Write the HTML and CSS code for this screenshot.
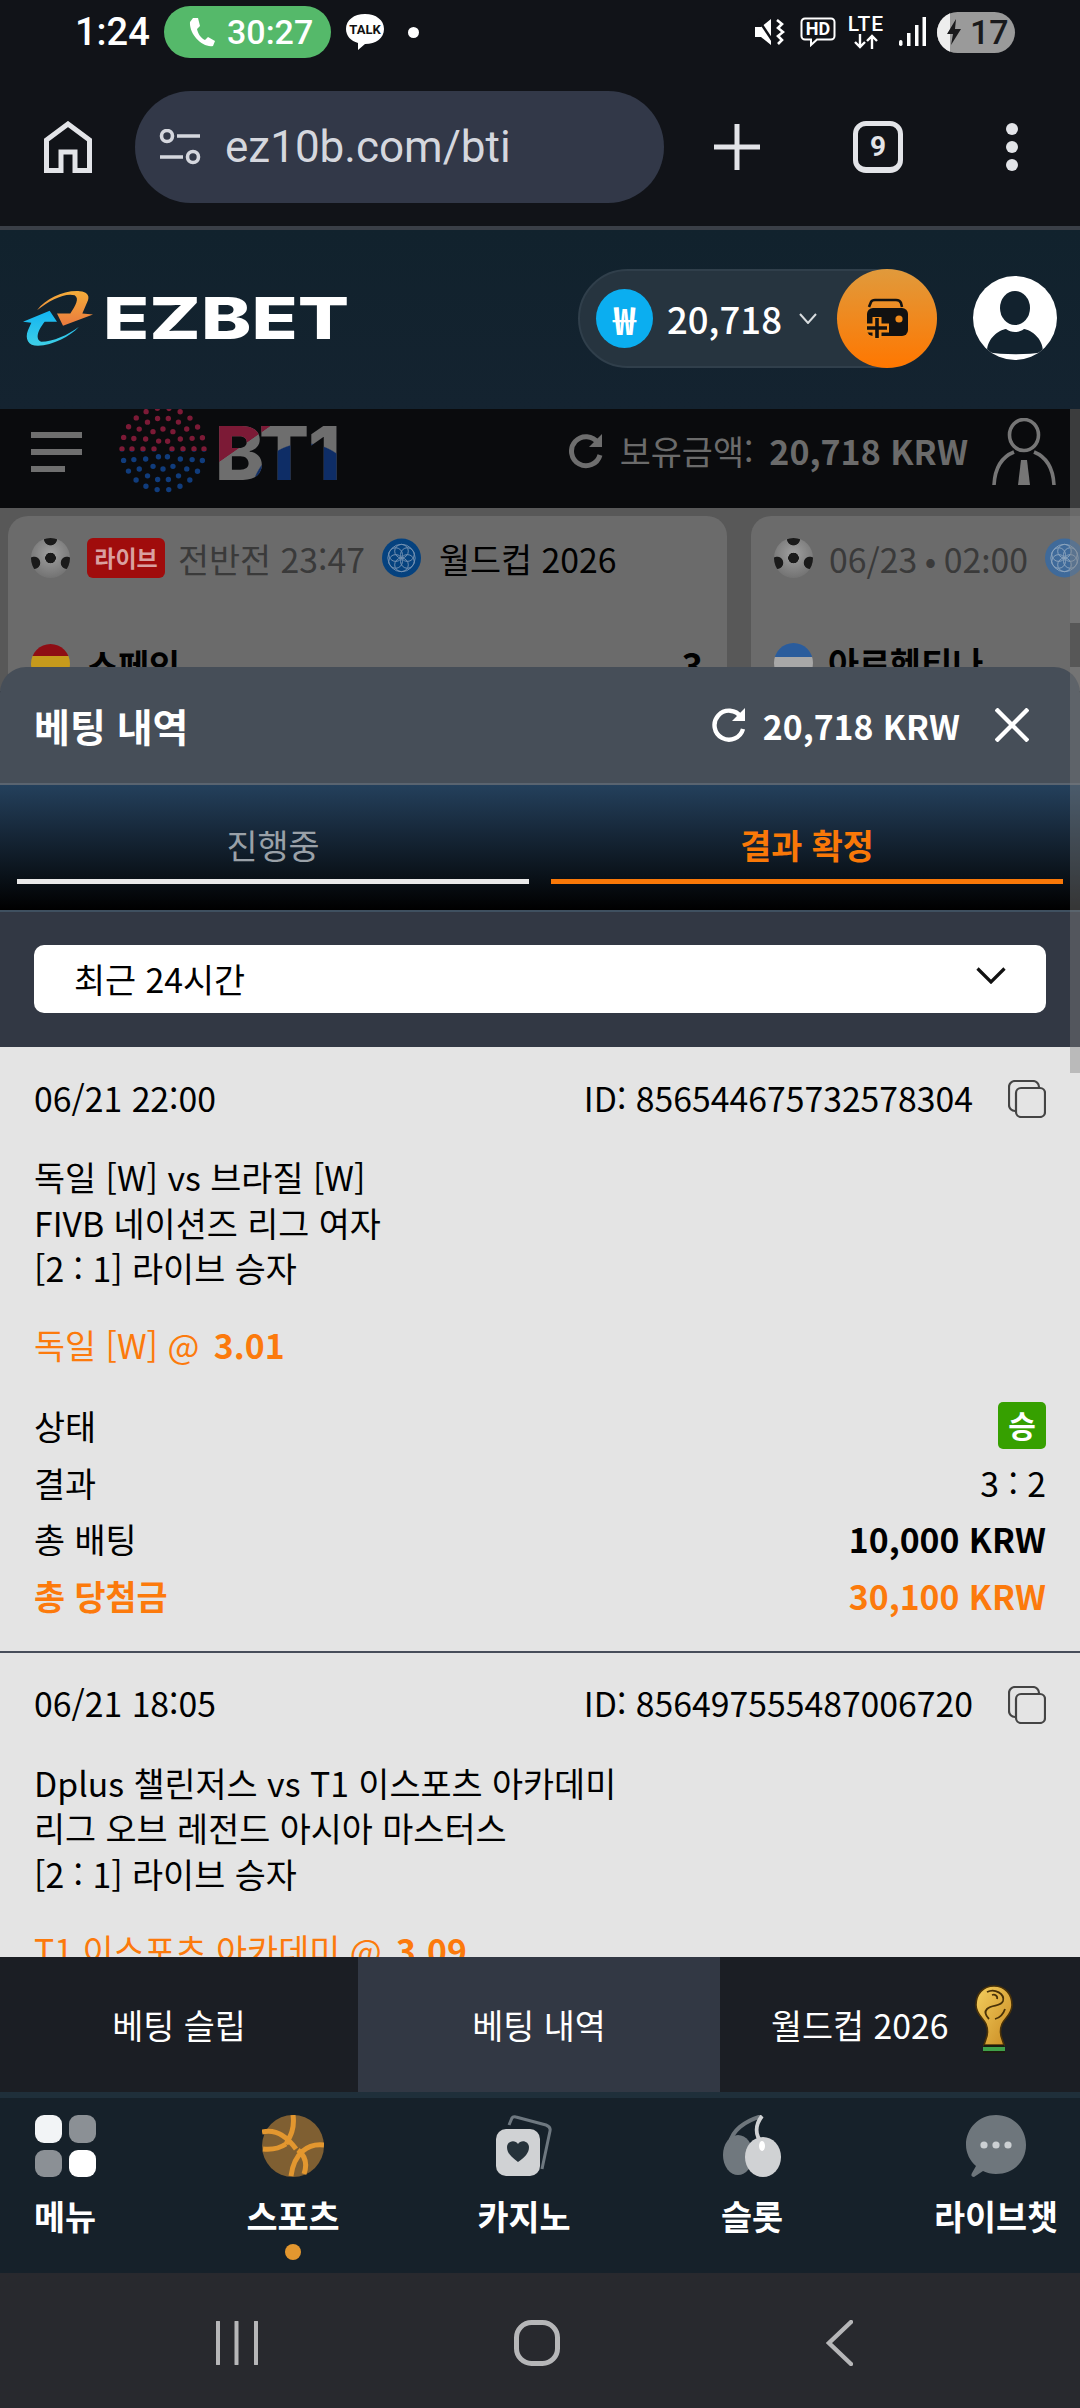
FILE: index.html
```html
<!DOCTYPE html>
<html lang="ko">
<head>
    <meta charset="UTF-8">
    <meta name="viewport" content="width=device-width, initial-scale=1.0">
    <title>베팅 내역</title>
    <link rel="stylesheet" href="styles.css">
</head>
<body>
<div class="screen">

    <!-- android status bar -->
    <div class="status">
        <span class="clock">1:24</span>
        <span class="call">
            <svg width="27" height="30" viewBox="0 0 27 30"><path d="M5 1 L10 1 L12 9 L9 12 C10 17 13 21 17 23 L20 20 L27 24 L25 29 C14 31 1 17 2 5 Z" fill="#fff"/></svg>
            30:27
        </span>
        <svg class="talk" width="38" height="36" viewBox="0 0 38 36"><path d="M19 0 C30 0 38 6 38 15 C38 24 30 30 19 30 L12 36 L12 29 C5 27 0 22 0 15 C0 6 8 0 19 0 Z" fill="#fff"/><text x="19" y="20" text-anchor="middle" class="talk-text">TALK</text></svg>
        <span class="notif-dot"></span>
        <span class="status-gap"></span>
        <svg width="30" height="28" viewBox="0 0 30 28"><path d="M0 9 H6 L16 1 V27 L6 19 H0 Z" fill="#fff"/><path d="M3 1 L19 25" stroke="#111318" stroke-width="2.5"/><path d="M22 2 L27 6 L23 10 L28 14 L23 18 L27 22 L23 26" fill="none" stroke="#fff" stroke-width="2.6"/></svg>
        <svg class="hd" width="36" height="30" viewBox="0 0 36 30"><path d="M5 1.5 H31 A3.5 3.5 0 0 1 34.5 5 V19 A3.5 3.5 0 0 1 31 22.5 H17 L11 28 V22.5 H5 A3.5 3.5 0 0 1 1.5 19 V5 A3.5 3.5 0 0 1 5 1.5 Z" fill="none" stroke="#fff" stroke-width="2"/><text x="18" y="18" text-anchor="middle" class="hd-text">HD</text></svg>
        <span class="lte">LTE<svg width="24" height="15" viewBox="0 0 24 15"><path d="M6 0 V13 M1 8 L6 13 L11 8 M18 15 V2 M13 7 L18 2 L23 7" fill="none" stroke="#fff" stroke-width="2.4"/></svg></span>
        <svg class="signal" width="27" height="30" viewBox="0 0 27 30"><rect x="0" y="23" width="3.5" height="6" rx="1.7" fill="#fff"/><rect x="8" y="16" width="3.5" height="13" fill="#fff"/><rect x="16" y="8" width="3.5" height="21" fill="#fff"/><rect x="23.5" y="0" width="3.5" height="29" fill="#fff"/></svg>
        <span class="battery">
            <span class="battery-fill"></span>
            <svg class="bolt" width="14" height="26" viewBox="0 0 14 26"><path d="M9 0 L0 15 H6 L4 26 L14 10 H8 Z" fill="#1a1a1c"/></svg>
            <span class="battery-num">17</span>
        </span>
    </div>

    <!-- chrome toolbar -->
    <div class="browser">
        <svg width="48" height="52" viewBox="0 0 48 52"><path d="M2.5 49.5 V19 L24 3 L45.5 19 V49.5 H31 V31 H17 V49.5 Z" fill="none" stroke="#e3e4e8" stroke-width="5"/></svg>
        <div class="urlbar">
            <svg width="42" height="36" viewBox="0 0 42 36"><circle cx="8" cy="7" r="5.5" fill="none" stroke="#d5d7de" stroke-width="3.6"/><path d="M18 7 H41 M1 28 H24" stroke="#d5d7de" stroke-width="3.6"/><circle cx="34" cy="28" r="5.5" fill="none" stroke="#d5d7de" stroke-width="3.6"/></svg>
            <span class="url">ez10b.com/bti</span>
        </div>
        <svg class="plus" width="46" height="46" viewBox="0 0 46 46"><path d="M23 0 V46 M0 23 H46" stroke="#e3e4e8" stroke-width="5"/></svg>
        <span class="tabcount">9</span>
        <span class="dots"><i></i><i></i><i></i></span>
    </div>

    <!-- site header -->
    <header class="site-head">
        <div class="logo">
            <svg width="70" height="57" viewBox="70 85 210 170">
                <defs>
                    <linearGradient id="lgo" x1="0" y1="0" x2="0" y2="1"><stop offset="0" stop-color="#f5ad3a"/><stop offset="1" stop-color="#ea7a3e"/></linearGradient>
                    <linearGradient id="lgb" x1="0" y1="0" x2="0" y2="1"><stop offset="0" stop-color="#12b4f2"/><stop offset="1" stop-color="#3ecfe6"/></linearGradient>
                </defs>
                <path d="M112 145 C140 110 190 85 240 88 C262 90 270 100 265 115 L248 155 L280 158 L190 192 L172 155 L212 155 C228 130 240 110 225 100 C195 92 150 115 112 145 Z" fill="url(#lgo)"/>
                <path d="M70 180 L150 147 L172 180 L135 180 C115 205 105 232 125 240 C160 240 205 220 238 195 C210 225 160 250 115 252 C85 252 75 230 85 205 L95 183 Z" fill="url(#lgb)"/>
            </svg>
            <span class="logo-text">EZBET</span>
        </div>
        <div class="balance">
            <span class="won">₩</span>
            <span class="balance-num">20,718</span>
            <svg width="18" height="11" viewBox="0 0 18 11"><path d="M1 1 L9 10 L17 1" fill="none" stroke="#d8dcdf" stroke-width="2"/></svg>
            <span class="wallet">
                <svg class="wallet-icon" width="43" height="38" viewBox="0 0 43 38"><path d="M3 8 L5 3 Q6 1 9 1 H30 Q34 1 35 4 L36 8" fill="none" stroke="#111" stroke-width="2.6"/><rect x="1" y="9" width="41" height="28" rx="6" fill="#111"/><circle cx="33" cy="20" r="3.6" fill="#f08a1a"/><path d="M11 18 V40 M-1 29 H23" stroke="#f08a1a" stroke-width="9"/><path d="M11 19 V39 M1 29 H21" stroke="#111" stroke-width="3.6"/></svg>
            </span>
        </div>
        <svg class="avatar" width="84" height="84" viewBox="0 0 84 84"><defs><clipPath id="av"><circle cx="42" cy="42" r="42"/></clipPath></defs><circle cx="42" cy="42" r="42" fill="#fff"/><ellipse cx="42" cy="32" rx="15" ry="17" fill="#12222e"/><path d="M14 76 C14 62 26 54 33 53 C38 57 46 57 51 53 C58 54 70 62 70 76 C55 79 30 79 14 76 Z" fill="#12222e" clip-path="url(#av)"/></svg>
    </header>

    <!-- embedded sportsbook, dimmed behind the sheet -->
    <div class="book-bar">
        <span class="burger"><i></i><i></i><i></i></span>
        <svg class="book-dots" width="88" height="84" viewBox="0 0 88 84">
            <defs>
                <clipPath id="halfT"><rect x="0" y="-2" width="88" height="44"/></clipPath>
                <clipPath id="halfB"><rect x="0" y="42" width="88" height="44"/></clipPath>
            </defs>
            <g fill="none" stroke-width="5.4" stroke-linecap="round" stroke="#7c1a36" clip-path="url(#halfT)">
                <circle cx="44" cy="40" r="41" stroke-dasharray="0 11.7"/>
                <circle cx="44" cy="40" r="31" stroke-dasharray="0 10.8"/>
                <circle cx="44" cy="40" r="20" stroke-dasharray="0 10.4"/>
                <circle cx="44" cy="40" r="9" stroke-dasharray="0 9.4"/>
            </g>
            <g fill="none" stroke-width="5.4" stroke-linecap="round" stroke="#103c7c" clip-path="url(#halfB)">
                <circle cx="44" cy="40" r="41" stroke-dasharray="0 11.7"/>
                <circle cx="44" cy="40" r="31" stroke-dasharray="0 10.8"/>
                <circle cx="44" cy="40" r="20" stroke-dasharray="0 10.4"/>
                <circle cx="44" cy="40" r="9" stroke-dasharray="0 9.4"/>
            </g>
        </svg>
        <span class="book-name">BT1</span>
        <span class="book-gap"></span>
        <svg class="book-refresh" width="34" height="36" viewBox="0 0 34 36"><path d="M29 10 A14.5 14.5 0 1 0 31 22" fill="none" stroke="#6e6e6e" stroke-width="5"/><path d="M33 1 V14 H20 Z" fill="#6e6e6e"/></svg>
        <span class="book-label">보유금액:</span>
        <span class="book-amount">20,718 KRW</span>
        <svg class="book-agent" width="64" height="68" viewBox="0 0 64 68"><ellipse cx="32" cy="17" rx="14.5" ry="15.5" fill="none" stroke="#767676" stroke-width="3.6"/><path d="M2 67 C3 48 12 38 22 34 M62 67 C61 48 52 38 42 34" fill="none" stroke="#767676" stroke-width="3.6"/><path d="M29 42 H35 L38 67 H26 Z" fill="#767676"/></svg>
    </div>

    <div class="behind">
        <div class="match">
            <div class="match-top">
                <span class="ball"></span>
                <span class="live">라이브</span>
                <span class="match-time">전반전 23:47</span>
                <svg class="cup" width="39" height="40" viewBox="0 0 40 40"><circle cx="20" cy="20" r="20" fill="#05427f"/><g fill="none" stroke="#7391b2" stroke-width="1"><circle cx="20" cy="20" r="14"/><circle cx="20" cy="13" r="7"/><circle cx="20" cy="27" r="7"/><circle cx="14" cy="16.5" r="7"/><circle cx="26" cy="16.5" r="7"/><circle cx="14" cy="23.5" r="7"/><circle cx="26" cy="23.5" r="7"/></g></svg>
                <span class="league">월드컵 2026</span>
            </div>
            <div class="team">
                <span class="flag flag-es"></span>
                <span class="team-name">스페인</span>
                <span class="team-score">3</span>
            </div>
        </div>
        <div class="match match-next">
            <div class="match-top">
                <span class="ball"></span>
                <span class="match-time">06/23 • 02:00</span>
                <svg class="cup" width="39" height="40" viewBox="0 0 40 40"><circle cx="20" cy="20" r="20" fill="#3f6a9a"/><g fill="none" stroke="#8ba3bd" stroke-width="1"><circle cx="20" cy="20" r="14"/><circle cx="20" cy="13" r="7"/><circle cx="20" cy="27" r="7"/><circle cx="14" cy="16.5" r="7"/><circle cx="26" cy="16.5" r="7"/><circle cx="14" cy="23.5" r="7"/><circle cx="26" cy="23.5" r="7"/></g></svg>
            </div>
            <div class="team">
                <span class="flag flag-ar"></span>
                <span class="team-name">아르헨티나</span>
            </div>
        </div>
    </div>

    <!-- bet history sheet -->
    <section class="sheet">
        <div class="sheet-head">
            <h1>베팅 내역</h1>
            <svg class="sheet-refresh" width="34" height="36" viewBox="0 0 34 36"><path d="M29 10 A14.5 14.5 0 1 0 31 22" fill="none" stroke="#fff" stroke-width="4.4"/><path d="M33 1 V14 H20 Z" fill="#fff"/></svg>
            <span class="sheet-amount">20,718 KRW</span>
            <svg class="sheet-close" width="34" height="34" viewBox="0 0 34 34"><path d="M1 1 L33 33 M33 1 L1 33" stroke="#fff" stroke-width="4.4"/></svg>
        </div>
        <div class="tabs">
            <div class="tab">진행중</div>
            <div class="tab tab-on">결과 확정</div>
        </div>
        <div class="filter">
            <div class="select">
                <span class="select-text">최근 24시간</span>
                <svg width="30" height="17" viewBox="0 0 30 17"><path d="M1.5 1.5 L15 15 L28.5 1.5" fill="none" stroke="#111" stroke-width="3.2"/></svg>
            </div>
        </div>
        <div class="bets">
            <article class="bet">
                <div class="bet-head">
                    <span class="bet-date">06/21 22:00</span>
                    <span class="bet-id">ID: 856544675732578304</span>
                    <svg class="copy" width="38" height="38" viewBox="0 0 38 38"><rect x="1" y="1" width="30" height="30" rx="6" fill="none" stroke="#444" stroke-width="2.2"/><rect x="8" y="8" width="29" height="29" rx="5" fill="#e4e4e4" stroke="#444" stroke-width="2.2"/></svg>
                </div>
                <div class="bet-title">
                    <div>독일 [W] vs 브라질 [W]</div>
                    <div>FIVB 네이션즈 리그 여자</div>
                    <div>[2 : 1] 라이브 승자</div>
                </div>
                <div class="bet-pick">독일 [W] @ <b>3.01</b></div>
                <div class="bet-rows">
                    <div class="row"><span>상태</span><span class="win">승</span></div>
                    <div class="row"><span>결과</span><span>3 : 2</span></div>
                    <div class="row"><span>총 배팅</span><b>10,000 KRW</b></div>
                    <div class="row row-total"><b>총 당첨금</b><b>30,100 KRW</b></div>
                </div>
            </article>
            <article class="bet">
                <div class="bet-head">
                    <span class="bet-date">06/21 18:05</span>
                    <span class="bet-id">ID: 856497555487006720</span>
                    <svg class="copy" width="38" height="38" viewBox="0 0 38 38"><rect x="1" y="1" width="30" height="30" rx="6" fill="none" stroke="#444" stroke-width="2.2"/><rect x="8" y="8" width="29" height="29" rx="5" fill="#e4e4e4" stroke="#444" stroke-width="2.2"/></svg>
                </div>
                <div class="bet-title">
                    <div>Dplus 챌린저스 vs T1 이스포츠 아카데미</div>
                    <div>리그 오브 레전드 아시아 마스터스</div>
                    <div>[2 : 1] 라이브 승자</div>
                </div>
                <div class="bet-pick">T1 이스포츠 아카데미 @ <b>3.09</b></div>
            </article>
        </div>
        <div class="sheet-nav">
            <div class="sheet-btn">베팅 슬립</div>
            <div class="sheet-btn sheet-btn-on">베팅 내역</div>
            <div class="sheet-btn sheet-btn-cup">
                월드컵 2026
                <svg class="trophy" width="38" height="68" viewBox="0 0 38 68">
                    <defs><linearGradient id="gold" x1="0" y1="0" x2="1" y2="1"><stop offset="0" stop-color="#f4cf5e"/><stop offset="1" stop-color="#c98a22"/></linearGradient></defs>
                    <path d="M19 1 C30 1 37 9 37 20 C37 29 30 33 27 39 C25 44 25 49 27 54 L29 60 H9 L11 54 C13 49 13 44 11 39 C8 33 1 29 1 20 C1 9 8 1 19 1 Z" fill="url(#gold)" stroke="#4a3208" stroke-width="1.6"/>
                    <path d="M12 7 C20 3 30 9 28 16 C26 22 17 19 12 24 C9 27 11 31 14 34 M30 24 C28 30 24 33 20 34 M17 10 C20 9 23 11 22 14" fill="none" stroke="#4a3208" stroke-width="1.8"/>
                    <rect x="9" y="60" width="20" height="2" fill="#1c1c10"/>
                    <rect x="8" y="62" width="22" height="5" fill="#3fa04a"/>
                    <rect x="8" y="66" width="22" height="2" fill="#1c1c10"/>
                </svg>
            </div>
        </div>
    </section>

    <!-- site bottom nav -->
    <nav class="bottom">
        <div class="nav-item">
            <span class="nav-icon quad"><i class="q1"></i><i class="q2"></i><i class="q2"></i><i class="q4"></i></span>
            <span class="nav-label">메뉴</span>
        </div>
        <div class="nav-item">
            <svg class="nav-icon" width="62" height="62" viewBox="0 0 62 62"><circle cx="31" cy="31" r="31" fill="#7f5f32"/><path d="M31 0 C33 14 28 22 24 29 M0 17 C12 14 24 20 34 34 M62 30 C46 28 32 38 29 61 M42 59 C46 48 42 40 36 35 M1 34 C10 35 18 33 24 29" fill="none" stroke="#e3972f" stroke-width="5"/></svg>
            <span class="nav-label">스포츠</span>
            <span class="nav-dot"></span>
        </div>
        <div class="nav-item">
            <svg class="nav-icon" width="56" height="62" viewBox="0 0 56 62"><path d="M13 10 L16 3 Q17 1 20 2 L50 10 Q55 12 54 16 L46 54" fill="none" stroke="#6e7880" stroke-width="3"/><rect x="0" y="14" width="44" height="47" rx="10" fill="#d0d2d4"/><path d="M22 47 C15 42 11 38 11 32 C11 26 19 24 22 29 C25 24 33 26 33 32 C33 38 29 42 22 47 Z" fill="#26323a"/></svg>
            <span class="nav-label">카지노</span>
        </div>
        <div class="nav-item">
            <svg class="nav-icon" width="60" height="62" viewBox="0 0 60 62"><path d="M8 28 C10 16 22 6 40 1" fill="none" stroke="#6e767c" stroke-width="4"/><ellipse cx="16" cy="40" rx="15" ry="20" fill="#70787e"/><path d="M40 1 C33 10 33 20 40 28" fill="none" stroke="#d0d2d4" stroke-width="4"/><ellipse cx="41" cy="42" rx="18" ry="20" fill="#d0d2d4"/><ellipse cx="40" cy="31" rx="3" ry="5" fill="#fff"/></svg>
            <span class="nav-label">슬롯</span>
        </div>
        <div class="nav-item">
            <svg class="nav-icon" width="60" height="62" viewBox="0 0 60 62"><path d="M30 0 C47 0 60 13 60 30 C60 47 47 59 30 59 C25 59 21 58 17 56 L8 62 C5 62 5 60 6 58 L10 51 C4 46 0 38 0 30 C0 13 13 0 30 0 Z" fill="#6e767c"/><circle cx="18" cy="30" r="3.6" fill="#ccd0d3"/><circle cx="30" cy="30" r="3.6" fill="#ccd0d3"/><circle cx="42" cy="30" r="3.6" fill="#ccd0d3"/></svg>
            <span class="nav-label">라이브챗</span>
        </div>
    </nav>

    <!-- android nav buttons -->
    <div class="softkeys">
        <svg width="42" height="44" viewBox="0 0 42 44"><path d="M2 1 V43 M20.5 1 V43 M40 1 V43" stroke="#b6b6b8" stroke-width="4" stroke-linecap="round"/></svg>
        <svg width="46" height="46" viewBox="0 0 46 46"><rect x="2.5" y="2.5" width="41" height="41" rx="15" fill="none" stroke="#b6b6b8" stroke-width="5"/></svg>
        <svg width="27" height="46" viewBox="0 0 27 46"><path d="M25 2 L3 23 L25 44" fill="none" stroke="#b6b6b8" stroke-width="4.4" stroke-linecap="round"/></svg>
    </div>

    <!-- page scrollbar, overlays everything -->
    <div class="scrollbar"><span class="scrollbar-inner"></span></div>
</div>
</body>
</html>
```

FILE: styles.css
```css
* {
    box-sizing: border-box;
}
body {
    margin: 0;
    font-family: "Noto Sans CJK KR", "Noto Sans", sans-serif;
    background-color: #111318;
}
h1 {
    margin: 0;
}
svg {
    display: block;
    flex: none;
}
.screen {
    position: relative;
    width: 1080px;
    height: 2408px;
    overflow: hidden;
    display: flex;
    flex-direction: column;
}

/* status bar */
.status {
    height: 70px;
    flex: none;
    display: flex;
    align-items: center;
    padding: 0 65px 6px 75px;
    background-color: #111318;
    color: #fff;
    font-family: Roboto, sans-serif;
}
.clock {
    font-size: 38px;
    font-weight: 500;
    width: 89px;
}
.call {
    width: 167px;
    height: 52px;
    border-radius: 26px;
    background-color: #55b96a;
    display: flex;
    align-items: center;
    gap: 12px;
    padding-left: 24px;
    font-size: 34px;
    font-weight: 500;
}
.talk {
    margin-left: 15px;
}
.talk-text {
    font-family: Roboto, sans-serif;
    font-size: 13px;
    font-weight: 700;
    fill: #111;
}
.notif-dot {
    width: 11px;
    height: 11px;
    border-radius: 50%;
    background-color: #fff;
    margin-left: 24px;
}
.status-gap {
    flex: 1;
}
.hd {
    margin-left: 15px;
}
.hd-text {
    font-family: Roboto, sans-serif;
    font-size: 18px;
    font-weight: 700;
    fill: #fff;
}
.lte {
    margin-left: 11px;
    width: 38px;
    font-size: 21px;
    font-weight: 500;
    line-height: 18px;
    letter-spacing: 1px;
    display: flex;
    flex-direction: column;
    align-items: center;
    gap: 1px;
}
.signal {
    margin-left: 14px;
}
.battery {
    position: relative;
    margin-left: 11px;
    width: 78px;
    height: 41px;
    border-radius: 21px;
    background-color: #9a9a9a;
    overflow: hidden;
    display: flex;
    align-items: center;
    color: #1a1a1c;
}
.battery-fill {
    width: 13px;
    height: 100%;
    background-color: #ededed;
}
.bolt {
    margin-left: -3px;
}
.battery-num {
    margin-left: 9px;
    font-size: 34px;
    font-weight: 500;
}

/* browser toolbar */
.browser {
    height: 160px;
    flex: none;
    display: flex;
    align-items: center;
    padding: 0 0 2px 44px;
    background-color: #111318;
    border-bottom: 4px solid #3a3f47;
}
.urlbar {
    width: 529px;
    height: 112px;
    margin-left: 43px;
    border-radius: 56px;
    background-color: #323848;
    display: flex;
    align-items: center;
    padding-left: 24px;
    gap: 24px;
}
.url {
    font-family: Roboto, sans-serif;
    font-size: 44px;
    color: #d5d7de;
}
.plus {
    margin-left: 50px;
}
.tabcount {
    width: 50px;
    height: 52px;
    margin-left: 93px;
    border: 5px solid #e3e4e8;
    border-bottom-width: 6px;
    border-radius: 13px;
    display: flex;
    align-items: center;
    justify-content: center;
    font-family: Roboto, sans-serif;
    font-size: 28px;
    font-weight: 700;
    color: #e3e4e8;
}
.dots {
    margin-left: 103px;
    display: flex;
    flex-direction: column;
    gap: 6px;
}
.dots i {
    width: 12px;
    height: 12px;
    border-radius: 50%;
    background-color: #e3e4e8;
}

/* site header */
.site-head {
    height: 179px;
    flex: none;
    display: flex;
    align-items: center;
    padding: 0 23px 3px 23px;
    background: linear-gradient(180deg, #11222d, #142330);
}
.logo {
    display: flex;
    align-items: center;
    width: 555px;
}
.logo-text {
    margin-left: 10px;
    font-family: Inter, sans-serif;
    font-size: 58px;
    font-weight: 800;
    line-height: 57px;
    color: #fff;
    transform: scaleX(1.31);
    transform-origin: left center;
}
.balance {
    width: 359px;
    height: 99px;
    border-radius: 50px;
    background-color: #26343f;
    border: 2px solid #303f4b;
    display: flex;
    align-items: center;
    padding-left: 16px;
    color: #fff;
}
.won {
    width: 57px;
    height: 59px;
    border-radius: 50%;
    background-color: #0baef0;
    display: flex;
    align-items: center;
    justify-content: center;
    font-size: 38px;
    font-weight: 700;
}
.balance-num {
    margin-left: 14px;
    margin-right: 17px;
    font-size: 36.5px;
    font-weight: 500;
}
.wallet {
    margin-left: auto;
    margin-right: -2px;
    width: 100px;
    height: 99px;
    border-radius: 50%;
    background: linear-gradient(180deg, #e09a3c, #ff7700);
    display: flex;
    align-items: center;
    justify-content: center;
}
.wallet-icon {
    overflow: visible;
}
.avatar {
    margin-left: 36px;
}

/* dimmed sportsbook */
.book-bar {
    height: 99px;
    flex: none;
    display: flex;
    align-items: flex-start;
    overflow: hidden;
    background-color: #0a0b0d;
    padding-left: 31px;
}
.burger {
    margin-top: 23px;
    width: 51px;
    display: flex;
    flex-direction: column;
    gap: 11px;
}
.burger i {
    height: 6px;
    background-color: #6f6f6f;
}
.burger i:last-child {
    width: 34px;
}
.book-dots {
    margin-left: 37px;
}
.book-name {
    margin-left: 8px;
    margin-top: 7px;
    font-family: Inter, sans-serif;
    font-size: 74px;
    font-weight: 800;
    line-height: 74px;
    letter-spacing: -1px;
    color: transparent;
    background:
        linear-gradient(145deg, #7c1a36 0 30%, transparent 30.5%),
        radial-gradient(circle at 72% 110%, #0e2d66 0 44%, transparent 45%),
        linear-gradient(#6e6e6e, #6e6e6e);
    -webkit-background-clip: text;
    background-clip: text;
}
.book-gap {
    flex: 1;
}
.book-refresh {
    margin-top: 24px;
}
.book-label {
    margin-left: 17px;
    font-size: 33.75px;
    line-height: 84px;
    color: #6b6b6b;
}
.book-amount {
    margin-left: 16px;
    font-size: 34px;
    font-weight: 700;
    line-height: 84px;
    color: #6b6b6b;
}
.book-agent {
    margin: 9px 24px 0 24px;
}
.behind {
    height: 183px;
    margin-bottom: -24px;
    flex: none;
    display: flex;
    gap: 24px;
    padding: 8px 0 0 8px;
    overflow: hidden;
    background-color: #585858;
}
.match {
    width: 719px;
    height: 220px;
    flex: none;
    border-radius: 20px;
    background-color: #6b6b6b;
    padding: 22px 23px;
}
.match-next {
    width: 500px;
}
.match-top {
    height: 40px;
    display: flex;
    align-items: center;
}
.ball {
    width: 39px;
    height: 40px;
    border-radius: 50%;
    background:
        radial-gradient(circle at 50% 50%, #1a1a1a 0 18%, transparent 20%),
        radial-gradient(circle at 50% 2%, #1a1a1a 0 14%, transparent 16%),
        radial-gradient(circle at 8% 62%, #1a1a1a 0 13%, transparent 15%),
        radial-gradient(circle at 92% 62%, #1a1a1a 0 13%, transparent 15%),
        radial-gradient(circle at 50% 40%, #a0a0a0, #666);
}
.live {
    margin-left: 17px;
    width: 78px;
    height: 40px;
    border-radius: 6px;
    background-color: #a00c0c;
    color: #d9a0a0;
    font-size: 23px;
    font-weight: 700;
    line-height: 38px;
    text-align: center;
}
.match-time {
    margin-left: 13px;
    font-size: 33.75px;
    color: #3a3a3a;
    white-space: nowrap;
}
.match-next .match-time {
    margin-left: 16px;
}
.cup {
    margin-left: 17px;
}
.league {
    margin-left: 18px;
    font-size: 33.75px;
    color: #000;
}
.team {
    margin-top: 60px;
    display: flex;
    align-items: center;
}
.flag {
    width: 39px;
    height: 40px;
    flex: none;
    border-radius: 50%;
}
.flag-es {
    background: linear-gradient(#8e0d14 0 30%, #c69a1c 30%);
}
.flag-ar {
    background: linear-gradient(#2a5c9c 0 34%, #a8a8a8 34%);
}
.team-name {
    margin-left: 17px;
    font-size: 33.75px;
    font-weight: 700;
    color: #000;
}
.match-next .team-name {
    margin-left: 15px;
}
.team-score {
    margin-left: auto;
    margin-right: 1px;
    font-size: 36px;
    font-weight: 700;
    color: #000;
}

/* sheet */
.sheet {
    position: relative;
    flex: 1;
    min-height: 0;
    display: flex;
    flex-direction: column;
    border-radius: 26px 26px 0 0;
    overflow: hidden;
}
.sheet-head {
    height: 118px;
    flex: none;
    display: flex;
    align-items: center;
    padding: 0 51px 0 34px;
    background-color: #464e58;
    border-bottom: 2px solid #5a6470;
    color: #fff;
}
.sheet-head h1 {
    flex: 1;
    font-size: 39px;
    font-weight: 700;
}
.sheet-amount {
    margin-left: 17px;
    font-size: 33.75px;
    font-weight: 700;
}
.sheet-close {
    margin-left: 35px;
}
.tabs {
    height: 127px;
    flex: none;
    display: flex;
    justify-content: space-between;
    padding: 0 17px;
    background: linear-gradient(180deg, #24405c, #000);
    border-bottom: 2px solid #3f5060;
}
.tab {
    width: 512px;
    height: 99px;
    border-bottom: 5px solid #e8e8e8;
    text-align: center;
    font-size: 33.75px;
    line-height: 120px;
    color: #9aa1a8;
}
.tab-on {
    border-bottom-color: #f97808;
    color: #f97808;
    font-weight: 700;
}
.filter {
    height: 135px;
    flex: none;
    padding: 33px 34px 34px;
    background-color: #323844;
}
.select {
    height: 68px;
    border-radius: 10px;
    background-color: #fff;
    display: flex;
    align-items: center;
    justify-content: space-between;
    padding: 0 40px;
    font-size: 33.75px;
    color: #000;
}
.select-text {
    margin-top: -2px;
}
.select svg {
    margin-top: -8px;
}
.bets {
    height: 910px;
    flex: none;
    overflow: hidden;
    background-color: #e4e4e4;
    color: #000;
    font-size: 33.75px;
}
.bet {
    padding: 27px 34px 27px;
    border-bottom: 2px solid #474d5a;
}
.bet-head {
    height: 46px;
    display: flex;
    align-items: center;
}
.bet-date {
    flex: 1;
}
.copy {
    margin-left: 35px;
    margin-top: 4px;
}
.bet-title {
    margin-top: 34px;
    line-height: 45.5px;
}
.bet-pick {
    margin-top: 31px;
    line-height: 46px;
    color: #fc7a0c;
}
.bet-pick b {
    margin-left: 5px;
}
.bet-rows {
    margin-top: 30px;
}
.row {
    height: 56.5px;
    display: flex;
    align-items: center;
    justify-content: space-between;
}
.row-total {
    color: #fc7a0c;
}
.win {
    width: 48px;
    height: 47px;
    border-radius: 5px;
    background-color: #36a000;
    color: #fff;
    font-size: 30px;
    font-weight: 700;
    line-height: 44px;
    text-align: center;
}
.sheet-nav {
    height: 135px;
    flex: none;
    display: flex;
    background-color: #1b1e24;
    color: #fff;
    font-size: 33.75px;
}
.sheet-btn {
    width: 358px;
    flex: none;
    display: flex;
    align-items: center;
    justify-content: center;
}
.sheet-btn-on {
    width: 362px;
    background-color: #323844;
}
.sheet-btn-cup {
    width: 360px;
    justify-content: flex-start;
    padding-left: 51px;
    gap: 26px;
}
.trophy {
    margin-top: -12px;
}

/* site bottom nav */
.bottom {
    height: 181px;
    flex: none;
    display: grid;
    grid-template-columns: 130px 326px 136px 320px 168px;
    background-color: #16212a;
    border-top: 6px solid #1f2f3a;
    padding-top: 17px;
}
.nav-item {
    display: flex;
    flex-direction: column;
    align-items: center;
    color: #fff;
}
.nav-icon {
    height: 62px;
}
.quad {
    width: 61px;
    display: grid;
    grid-template-columns: 27px 27px;
    gap: 7px;
}
.quad i {
    border-radius: 9px;
}
.quad .q1 {
    background-color: #f2f4f6;
}
.quad .q2 {
    background-color: #8b9095;
}
.quad .q4 {
    background-color: #fff;
}
.nav-label {
    margin-top: 15px;
    font-size: 33.75px;
    font-weight: 700;
    line-height: 48px;
    white-space: nowrap;
}
.nav-dot {
    width: 16px;
    height: 16px;
    margin-top: 4px;
    border-radius: 50%;
    background-color: #e3972f;
}

/* soft keys */
.softkeys {
    height: 135px;
    flex: none;
    display: grid;
    grid-template-columns: 216px 298px 312px 1fr;
    align-items: center;
    background-color: #28292e;
    padding-top: 5px;
}
.softkeys svg:nth-child(1) {
    grid-column: 2;
}
.softkeys svg:nth-child(2) {
    grid-column: 3;
}
.softkeys svg:nth-child(3) {
    grid-column: 4;
}

.scrollbar {
    position: absolute;
    top: 409px;
    right: 0;
    width: 10px;
    height: 664px;
    background-color: rgba(128, 128, 128, 0.42);
}
.scrollbar-inner {
    position: absolute;
    top: 214px;
    left: 0;
    width: 10px;
    height: 44px;
    background-color: rgba(0, 0, 0, 0.25);
}
```
